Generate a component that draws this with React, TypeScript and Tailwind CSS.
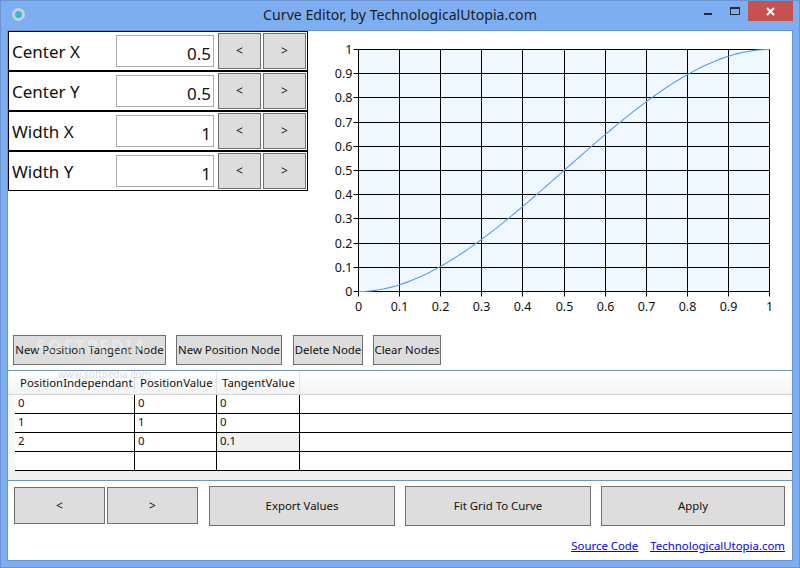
const font = { fontFamily: '"Noto Sans", "Open Sans", sans-serif' }

const params = [
    { label: 'Center X', value: '0.5' },
    { label: 'Center Y', value: '0.5' },
    { label: 'Width X', value: '1' },
    { label: 'Width Y', value: '1' },
]

const rows = [
    ['0', '0', '0'],
    ['1', '1', '0'],
    ['2', '0', '0.1'],
    ['', '', ''],
]

const ticks = [0, 0.1, 0.2, 0.3, 0.4, 0.5, 0.6, 0.7, 0.8, 0.9, 1]

function Btn({ children, className }: { children: React.ReactNode; className: string }) {
    return (
        <button className={`bg-[#dddddd] border border-[#707070] text-[#111] flex items-center justify-center leading-none whitespace-nowrap ${className}`}>
            {children}
        </button>
    )
}

function Chart() {
    const left = 28.5
    const top = 18.5
    const w = 411
    const h = 242
    let curve = ''
    for (let i = 0; i <= 100; i++) {
        const t = i / 100
        const v = 3 * t * t - 2 * t * t * t
        curve += `${left + t * w},${top + h - v * h} `
    }
    return (
        <svg width="462" height="300" className="block">
            <rect x={left} y={top} width={w} height={h} fill="#eff7ff" />
            {ticks.map((t) => {
                const x = Math.round(left + t * w - 0.5) + 0.5
                const y = Math.round(top + h - t * h - 0.5) + 0.5
                return (
                    <g key={t}>
                        <line x1={x} y1={top} x2={x} y2={top + h + 5} stroke="#000" />
                        <line x1={left - 5} y1={y} x2={left + w} y2={y} stroke="#000" />
                        <text x={x} y={top + h + 19} textAnchor="middle" fontSize="12.5" fill="#111" style={font}>{t}</text>
                        <text x={left - 6} y={y + 4.5} textAnchor="end" fontSize="12.5" fill="#111" style={font}>{t}</text>
                    </g>
                )
            })}
            <polyline points={curve} fill="none" stroke="#5b9ff5" strokeWidth="1.1" />
        </svg>
    )
}

export default function App() {
    return (
        <div className="w-[800px] h-[568px] bg-[#7eaef2] shadow-[inset_0_0_0_1px_#6a93cf] flex flex-col overflow-hidden" style={font}>
            {/* title bar */}
            <div className="h-[30px] shrink-0 grid grid-cols-[1fr_auto_1fr]">
                <div className="flex items-center pl-[12px] pb-[1px]">
                    <div className="w-[13px] h-[13px] rounded-full bg-[#35b6d6] border-[3px] border-[#c3d2e2]"></div>
                </div>
                <div className="text-[14.15px] text-[#1c1c1c] flex items-center justify-center pb-[1px]">Curve Editor, by TechnologicalUtopia.com</div>
                <div className="flex justify-end items-start">
                    <div className="w-[8px] h-[2px] bg-[#2a2a2a] mt-[13px] mr-[18px]"></div>
                    <div className="w-[10px] h-[8px] border border-t-2 border-[#2a2a2a] mt-[7px] mr-[8px]"></div>
                    <div className="w-[45px] h-[20px] bg-[#c75050] mt-[1px] mr-[7px] flex items-center justify-center">
                        <svg width="9" height="9" viewBox="0 0 9 9">
                            <path d="M1 1 L8 8 M8 1 L1 8" stroke="#fff" strokeWidth="2" />
                        </svg>
                    </div>
                </div>
            </div>

            {/* client area */}
            <div className="flex-1 mx-[7px] mb-[7px] bg-white border border-[#6a93cf] flex flex-col min-h-0">
                <div className="h-[304px] shrink-0 flex">
                    <div className="w-[300px] flex flex-col">
                        {params.map((p, i) => (
                            <div key={p.label} className={`flex items-center border-x border-black ${i === 0 ? 'h-[39px] border-t' : 'border-t-2'} ${i === 1 || i === 2 ? 'h-[40px]' : ''} ${i === 3 ? 'h-[41px] border-b' : ''}`}>
                                <div className="w-[107px] pl-[3px] pt-[1px] text-[17px] text-[#111] shrink-0">{p.label}</div>
                                <div className="w-[98px] h-[32px] shrink-0 border border-[#ababab] bg-white text-[17px] text-right pr-[2px] pt-[5px] text-[#111] leading-[26px]">{p.value}</div>
                                <Btn className="w-[43px] h-[36px] ml-[4px] text-[12px]">&lt;</Btn>
                                <Btn className="w-[43px] h-[36px] ml-[2px] text-[12px]">&gt;</Btn>
                            </div>
                        ))}
                    </div>
                    <div className="ml-[22px]">
                        <Chart />
                    </div>
                </div>

                <div className="h-[30px] shrink-0 flex text-[11.4px]">
                    <Btn className="w-[153px] ml-[5px]">New Position Tangent Node</Btn>
                    <Btn className="w-[106px] ml-[10px]">New Position Node</Btn>
                    <Btn className="w-[70px] ml-[11px]">Delete Node</Btn>
                    <Btn className="w-[68px] ml-[10px]">Clear Nodes</Btn>
                </div>

                <div className="relative h-[111px] shrink-0 mt-[5px] border-y border-[#6f93bf] bg-[#f0f0f0] text-[11.4px] text-[#111]">
                    <div className="flex h-[24px] pl-[7px] bg-gradient-to-b from-white to-[#f2f3f4] border-b border-[#d5d5d5]">
                        <div className="w-[120px] border-r border-[#e3e3e3] pl-[5px] flex items-center">PositionIndependant</div>
                        <div className="w-[82px] border-r border-[#e3e3e3] pl-[5px] flex items-center">PositionValue</div>
                        <div className="w-[83px] border-r border-[#e3e3e3] pl-[5px] flex items-center">TangentValue</div>
                    </div>
                    <div className="pl-[7px] bg-[#f8f8f8]">
                        {rows.map((r, i) => (
                            <div key={i} className="flex h-[19px] bg-white border-b border-black">
                                <div className="w-[120px] border-r border-black pl-[3px] pb-[2px] flex items-center">{r[0]}</div>
                                <div className="w-[82px] border-r border-black pl-[3px] pb-[2px] flex items-center">{r[1]}</div>
                                <div className={`w-[83px] border-r border-black pl-[3px] pb-[2px] flex items-center ${i === 2 ? 'bg-[#f0f0f0]' : ''}`}>{r[2]}</div>
                                <div className="flex-1"></div>
                            </div>
                        ))}
                    </div>
                    {/* softpedia watermark */}
                    <div className="absolute left-[28px] -top-[36px] text-[18px] font-bold tracking-[1.5px] leading-[22px] text-white/35 pointer-events-none">SOFTPEDIA</div>
                    <div className="absolute left-[50px] -top-[3px] text-[10px] leading-[12px] text-[#999]/35 pointer-events-none">www.softpedia.com</div>
                </div>

                <div className="flex items-start h-[40px] shrink-0 mt-[5px] text-[11.4px]">
                    <Btn className="w-[91px] h-[37px] ml-[6px] mt-[1px] text-[12px]">&lt;</Btn>
                    <Btn className="w-[91px] h-[37px] ml-[2px] mt-[1px] text-[12px]">&gt;</Btn>
                    <Btn className="w-[186px] h-[40px] ml-[11px]">Export Values</Btn>
                    <Btn className="w-[186px] h-[40px] ml-[10px]">Fit Grid To Curve</Btn>
                    <Btn className="w-[184px] h-[40px] ml-[10px]">Apply</Btn>
                </div>

                <div className="flex-1 flex items-end justify-end gap-[12px] pr-[7px] pb-[6px] text-[11.4px] text-[#0000ff] underline">
                    <a href="#">Source Code</a>
                    <a href="#">TechnologicalUtopia.com</a>
                </div>
            </div>
        </div>
    )
}
